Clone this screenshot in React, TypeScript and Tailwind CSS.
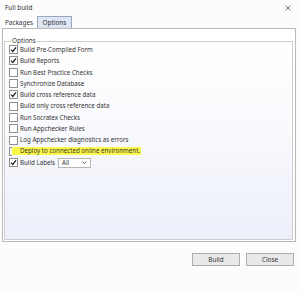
import { useState } from "react";

const options = [
  { label: "Build Pre-Compiled Form", checked: true },
  { label: "Build Reports", checked: true },
  { label: "Run Best Practice Checks", checked: false },
  { label: "Synchronize Database", checked: false },
  { label: "Build cross reference data", checked: true },
  { label: "Build only cross reference data", checked: false },
  { label: "Run Socratex Checks", checked: false },
  { label: "Run Appchecker Rules", checked: false },
  { label: "Log Appchecker diagnostics as errors", checked: false },
];

function Check({ checked }: { checked: boolean }) {
  return (
    <span className="flex h-[9px] w-[9px] shrink-0 items-center justify-center border border-[#8f8f8f] bg-white">
      {checked && (
        <svg width="7" height="7" viewBox="0 0 7 7">
          <path d="M1 3.6 L2.8 5.4 L6 1.3" fill="none" stroke="#222" strokeWidth="1.3" />
        </svg>
      )}
    </span>
  );
}

export default function App() {
  const [tab, setTab] = useState("Options");

  return (
    <div className="relative h-[292px] w-[300px] overflow-hidden bg-[#fcfcfc] text-[6.2px] text-[#333] font-['Noto_Sans',sans-serif]">
      {/* title bar */}
      <div className="flex h-[15px] items-center justify-between pl-[5px] pr-[9px] text-[6.4px]">
        <span>Full build</span>
        <svg width="6" height="6" viewBox="0 0 6 6">
          <path d="M0.5 0.5 L5.5 5.5 M5.5 0.5 L0.5 5.5" stroke="#777" strokeWidth="1" />
        </svg>
      </div>

      {/* tabs */}
      <div className="flex h-[13px] items-end pl-[1px] text-[6.4px]">
        {["Packages", "Options"].map((t) => (
          <button
            key={t}
            onClick={() => setTab(t)}
            className={
              t === tab
                ? "h-[12px] w-[35px] border border-b-0 border-[#98a6bf] bg-[#dfe6f3] leading-[11px]"
                : "h-[11px] w-[36px] border border-b-0 border-transparent bg-white leading-[10px]"
            }
          >
            {t}
          </button>
        ))}
      </div>

      {/* tab panel */}
      <div className="mx-[2px] h-[214px] w-[294px] border border-[#b9b9b9] bg-white pl-[1px] pr-[2px] pt-[8px]">
        <fieldset className="h-[203px] border border-[#cfcfcf] bg-gradient-to-b from-white via-[#f8f9fd] to-[#eceffa] pl-[4px]">
          <legend className="ml-[2px] px-[1px] leading-[8px] text-[6.4px]">Options</legend>
          <div className="-mt-[1px]">
            {options.map((o) => (
              <div key={o.label} className="flex h-[11.3px] items-center gap-[2px]">
                <Check checked={o.checked} />
                <span>{o.label}</span>
              </div>
            ))}
            <div className="flex h-[11.3px] items-center">
              <span className="h-[9px] w-[3px] shrink-0 border-y border-l border-[#8f8f8f]" />
              <span className="bg-[#fcf84a] pr-[1px] pl-[8px] leading-[8px]">
                Deploy to connected online environment.
              </span>
            </div>
            <div className="flex h-[11.3px] items-center gap-[2px]">
              <Check checked />
              <span>Build Labels</span>
              <span className="ml-[1px] flex h-[10px] w-[33px] items-center justify-between border border-[#b5b5b5] bg-white pl-[3px] pr-[3px]">
                <span>All</span>
                <svg width="5" height="3" viewBox="0 0 5 3">
                  <path d="M0.5 0.5 L2.5 2.5 L4.5 0.5" fill="none" stroke="#555" strokeWidth="0.9" />
                </svg>
              </span>
            </div>
          </div>
        </fieldset>
      </div>

      {/* buttons */}
      <div className="mt-[11px] flex justify-end gap-[6px] pr-[6px] text-[6.4px]">
        <button className="h-[13px] w-[48px] border border-[#adadad] bg-[#e9e9e9]">Build</button>
        <button className="h-[13px] w-[48px] border border-[#adadad] bg-[#e9e9e9]">Close</button>
      </div>
    </div>
  );
}
